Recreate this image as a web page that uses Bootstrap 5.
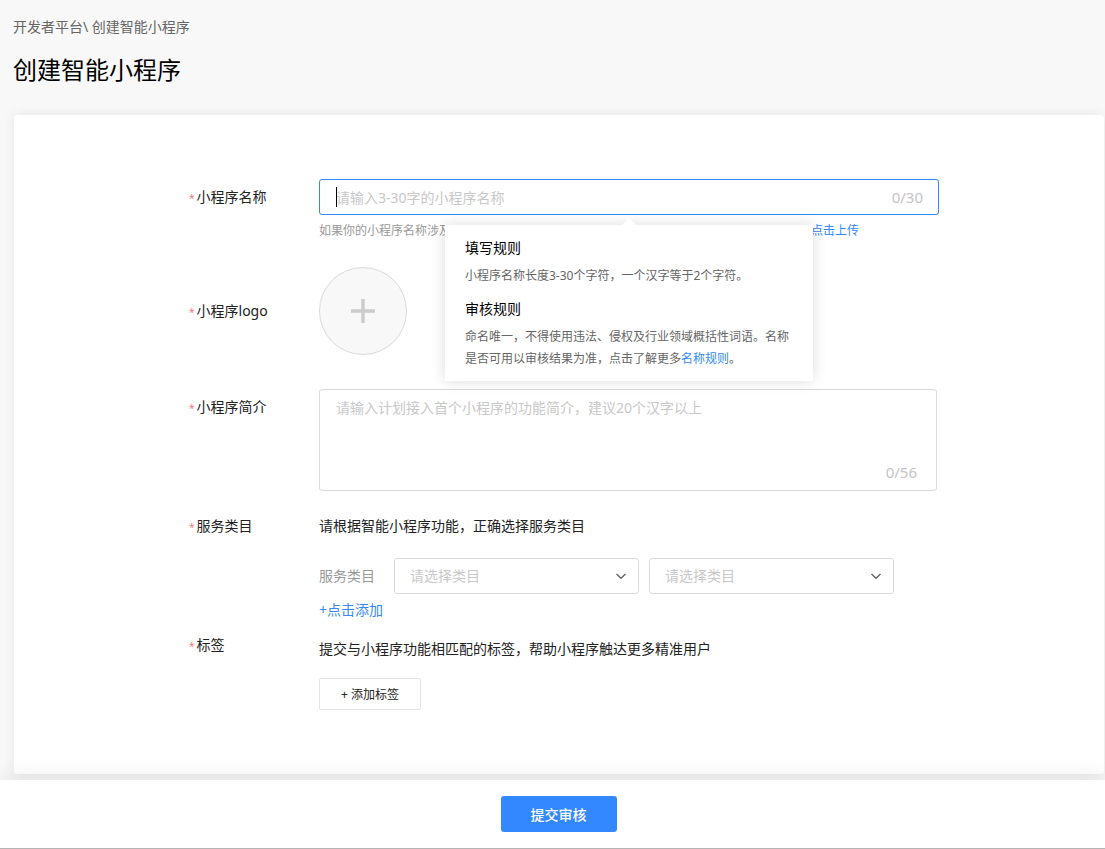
<!DOCTYPE html>
<html lang="zh-CN">
<head>
<meta charset="utf-8">
<meta name="viewport" content="width=device-width, initial-scale=1">
<title>创建智能小程序</title>
<link href="https://cdn.jsdelivr.net/npm/bootstrap@5.3.0/dist/css/bootstrap.min.css" rel="stylesheet">
<style>
  :root { --brand: #3388ff; --line: #d9d9d9; --hint: #c8c8c8; }
  body { background: #f8f8f8; color: #222; font: 14px/22px "Noto Sans", "Noto Sans CJK SC", sans-serif; }
  a { color: var(--brand); text-decoration: none; }
  .page-main { padding: 16px 1px 70px 13px; }
  .crumbs, .crumbs a { color: #666; }
  .page-title { margin: 15px 0 0; font-size: 24px; line-height: 34px; font-weight: 400; color: #000; }
  .panel { margin: 28px 0 0 1px; padding: 64px 16px; background: #fff; border-radius: 3px; box-shadow: 0 0 12px rgba(0,0,0,.08); }
  .app-form { max-width: 760px; }
  .field-label { flex: 0 0 140px; padding-left: 10px; color: #222; }
  .field-label.drop { padding-top: 7px; }
  .field-label::before { content: "*"; color: #f77; font-size: 10px; margin-right: 2px; }
  .box.form-control, .box.form-select { border: 1px solid var(--line); border-radius: 3px; padding: 6px 16px; font-size: 14px; line-height: 22px; height: 36px; background-color: #fff; }
  .box.form-control.active-box { border-color: var(--brand); }
  .box.form-control::placeholder { color: var(--hint); opacity: 1; }
  .box.form-control.intro { height: 102px; resize: none; padding-top: 7px; }
  .box.form-select { flex: 0 1 245px; width: 245px; padding-left: 15px; color: var(--hint); background-size: 12px 12px; background-position: right 11px center;
    background-image: url("data:image/svg+xml,%3csvg xmlns='http://www.w3.org/2000/svg' viewBox='0 0 12 12'%3e%3cpath fill='none' stroke='%23666' stroke-width='1.4' d='M1.5 4l4.5 4.2L10.500 4'/%3e%3c/svg%3e"); }
  .counter { position: absolute; right: 16px; top: 7px; font-size: 15px; color: #c4c4c4; }
  .counter.low { right: 20px; top: auto; bottom: 8px; }
  .caret-bar { position: absolute; left: 17px; top: 8px; width: 1px; height: 20px; background: #000; }
  .note { margin: 6px 80px 26px 0; font-size: 12px; line-height: 20px; color: #999; }
  .rules { position: absolute; z-index: 5; top: 46px; left: 126px; width: 368px; padding: 12px 20px 11px; background: #fff; box-shadow: 0 0 14px rgba(0,0,0,.14); font-size: 12px; color: #666; }
  .rules::before { content: ""; position: absolute; left: 177px; top: -7px; border: 7px solid transparent; border-top: 0; border-bottom-color: #fff; }
  .rules h2 { margin: 0 0 6px; font-size: 14px; line-height: 22px; font-weight: 400; color: #000; }
  .rules p { margin: 0 0 11px; }
  .rules p:last-child { margin: 0; }
  .logo-add { width: 88px; height: 88px; border: 1px solid var(--line); border-radius: 50%; background: #f8f8f8; }
  .logo-row { margin-bottom: 34px; }
  .intro-row { margin-bottom: 24px; }
  .intro-wrap { margin-right: 2px; }
  .pick-row { margin-top: 21px; margin-bottom: 5px; gap: 10px; }
  .pick-row label { width: 65px; color: #999; }
  .tag-row { margin-top: 13px; }
  .tag-row p { margin: 4px 0 18px; }
  .tag-add { height: 32px; width: 102px; border: 1px solid #e3e3e3; border-radius: 2px; background: #fff; font-size: 12px; color: #222; padding: 2px 0 0; }
  .submit-bar { padding: 16px 0 16px 12px; background: #fff; border-bottom: 1px solid #b4b4b4; box-shadow: 0 0 24px rgba(0,0,0,.1); }
  .submit-bar .btn { width: 116px; height: 36px; padding: 0; border: 0; border-radius: 3px; background: var(--brand); font-size: 14px; font-weight: 500; color: #fff; }
</style>
</head>
<body>
<main class="page-main">
  <nav class="crumbs" aria-label="breadcrumb"><a href="#">开发者平台</a>\ <span>创建智能小程序</span></nav>
  <h1 class="page-title">创建智能小程序</h1>

  <section class="panel">
    <form class="app-form mx-auto" id="appForm">
      <div class="d-flex">
        <label class="field-label drop" for="appName">小程序名称</label>
        <div class="flex-grow-1 position-relative">
          <div class="position-relative">
            <input id="appName" class="form-control box active-box" type="text" placeholder="请输入3-30字的小程序名称">
            <span class="caret-bar"></span>
            <span class="counter">0/30</span>
          </div>
          <div class="note d-flex justify-content-between"><span>如果你的小程序名称涉及</span><a href="#">点击上传</a></div>
          <div class="rules" role="tooltip">
            <h2>填写规则</h2>
            <p>小程序名称长度3-30个字符，一个汉字等于2个字符。</p>
            <h2>审核规则</h2>
            <p>命名唯一，不得使用违法、侵权及行业领域概括性词语。名称是否可用以审核结果为准，点击了解更多<a href="#">名称规则</a>。</p>
          </div>
        </div>
      </div>

      <div class="d-flex align-items-center logo-row">
        <label class="field-label" for="appLogo">小程序logo</label>
        <button id="appLogo" type="button" class="logo-add d-flex align-items-center justify-content-center p-0" aria-label="上传logo">
          <svg width="24" height="24" viewBox="0 0 24 24" aria-hidden="true"><path d="M12 0v24M0 12h24" stroke="#ccc" stroke-width="3.4"/></svg>
        </button>
      </div>

      <div class="d-flex intro-row">
        <label class="field-label drop" for="appIntro">小程序简介</label>
        <div class="flex-grow-1 position-relative intro-wrap">
          <textarea id="appIntro" class="form-control box intro d-block" placeholder="请输入计划接入首个小程序的功能简介，建议20个汉字以上"></textarea>
          <span class="counter low">0/56</span>
        </div>
      </div>

      <div class="d-flex">
        <div class="field-label">服务类目</div>
        <div class="flex-grow-1">
          <div>请根据智能小程序功能，正确选择服务类目</div>
          <div class="d-flex align-items-center pick-row">
            <label for="catOne">服务类目</label>
            <select id="catOne" class="form-select box"><option>请选择类目</option></select>
            <select class="form-select box" aria-label="二级服务类目"><option>请选择类目</option></select>
          </div>
          <a href="#">+点击添加</a>
        </div>
      </div>

      <div class="d-flex tag-row">
        <label class="field-label" for="tagAdd">标签</label>
        <div class="flex-grow-1">
          <p>提交与小程序功能相匹配的标签，帮助小程序触达更多精准用户</p>
          <button id="tagAdd" type="button" class="tag-add d-block">+ 添加标签</button>
        </div>
      </div>
    </form>
  </section>
</main>

<footer class="submit-bar fixed-bottom text-center">
  <button type="submit" form="appForm" class="btn">提交审核</button>
</footer>
<script src="https://cdn.jsdelivr.net/npm/bootstrap@5.3.0/dist/js/bootstrap.bundle.min.js"></script>
</body>
</html>
